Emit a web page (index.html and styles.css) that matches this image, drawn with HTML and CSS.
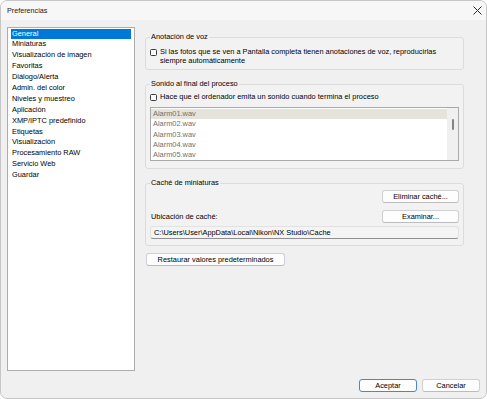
FILE: index.html
```html
<!DOCTYPE html>
<html lang="es">
<head>
    <meta charset="UTF-8">
    <meta name="viewport" content="width=device-width, initial-scale=1.0">
    <title>Preferencias</title>
    <link rel="stylesheet" href="styles.css">
</head>
<body>
    <div class="window">
        <div class="titlebar">
            <span class="title">Preferencias</span>
            <svg class="close-icon" width="9" height="9" viewBox="0 0 9 9">
                <path d="M0.5 0.5 L8.5 8.5 M8.5 0.5 L0.5 8.5" stroke="#2b2b2b" stroke-width="1" fill="none"/>
            </svg>
        </div>

        <div class="content">
            <ul class="nav-list">
                <li class="nav-item selected">General</li>
                <li class="nav-item">Miniaturas</li>
                <li class="nav-item">Visualización de imagen</li>
                <li class="nav-item">Favoritas</li>
                <li class="nav-item">Diálogo/Alerta</li>
                <li class="nav-item">Admin. del color</li>
                <li class="nav-item">Niveles y muestreo</li>
                <li class="nav-item">Aplicación</li>
                <li class="nav-item">XMP/IPTC predefinido</li>
                <li class="nav-item">Etiquetas</li>
                <li class="nav-item">Visualización</li>
                <li class="nav-item">Procesamiento RAW</li>
                <li class="nav-item">Servicio Web</li>
                <li class="nav-item">Guardar</li>
            </ul>

            <div class="panel">
                <fieldset class="group group-voice">
                    <legend>Anotación de voz</legend>
                    <label class="check">
                        <span class="check-box"></span>
                        <span class="check-text">Si las fotos que se ven a Pantalla completa tienen anotaciones de voz, reproducirlas<br>siempre automáticamente</span>
                    </label>
                </fieldset>

                <fieldset class="group group-sound">
                    <legend>Sonido al final del proceso</legend>
                    <label class="check">
                        <span class="check-box"></span>
                        <span class="check-text">Hace que el ordenador emita un sonido cuando termina el proceso</span>
                    </label>
                    <div class="sound-list">
                        <ul class="sound-items">
                            <li class="sound-item active">Alarm01.wav</li>
                            <li class="sound-item">Alarm02.wav</li>
                            <li class="sound-item">Alarm03.wav</li>
                            <li class="sound-item">Alarm04.wav</li>
                            <li class="sound-item">Alarm05.wav</li>
                        </ul>
                        <div class="scrollbar">
                            <div class="scroll-thumb"></div>
                        </div>
                    </div>
                </fieldset>

                <fieldset class="group group-cache">
                    <legend>Caché de miniaturas</legend>
                    <div class="cache-row cache-row-top">
                        <button class="btn btn-cache">Eliminar caché...</button>
                    </div>
                    <div class="cache-row">
                        <span>Ubicación de caché:</span>
                        <button class="btn btn-cache">Examinar...</button>
                    </div>
                    <div class="path-field">C:\Users\User\AppData\Local\Nikon\NX Studio\Cache</div>
                </fieldset>

                <button class="btn btn-restore">Restaurar valores predeterminados</button>
            </div>
        </div>

        <div class="footer">
            <button class="btn btn-dialog btn-default">Aceptar</button>
            <button class="btn btn-dialog">Cancelar</button>
        </div>
    </div>
</body>
</html>
```
FILE: styles.css
```css
:root {
    --window-bg: #f0f0f0;
    --title-bg: #f7f7f7;
    --text-color: #000;
    --accent: #0078d7;
    --group-border: #dcdcdc;
}

* {
    margin: 0;
    padding: 0;
    box-sizing: border-box;
    font-family: 'Liberation Sans', Arial, sans-serif;
}

body {
    background: #ffffff;
    color: var(--text-color);
    font-size: 7.4px;
}

.window {
    width: 487px;
    height: 399px;
    border: 1px solid #c6c6c6;
    border-radius: 7px;
    overflow: hidden;
    background-color: var(--window-bg);
    display: flex;
    flex-direction: column;
}

.titlebar {
    height: 19px;
    background-color: var(--title-bg);
    display: flex;
    align-items: center;
    justify-content: space-between;
    padding: 0 4px 0 6px;
}

.title {
    font-size: 7.2px;
    color: #1a1a1a;
}

.close-icon {
    display: block;
}

.content {
    flex: 1;
    display: flex;
    padding: 7px 0 0 6px;
}

/* left category list */
.nav-list {
    list-style: none;
    width: 128px;
    height: 344px;
    background: #fff;
    border: 1px solid #adadad;
    padding: 0.5px 3px 0 3px;
}

.nav-item {
    height: 10.9px;
    line-height: 10.9px;
    padding-left: 1px;
    white-space: nowrap;
}

.nav-item.selected {
    background-color: var(--accent);
    color: #fff;
}

.panel {
    width: 319px;
    margin-left: 10px;
}

/* group boxes */
.group {
    border: 1px solid var(--group-border);
    border-radius: 3px;
    background-color: #f2f2f2;
    padding: 0 3px 0 4px;
    margin-top: 8px;
}

.group legend {
    line-height: 10px;
    padding: 0 1px;
    margin-left: 0;
}

.group-voice {
    margin-top: 5px;
    padding-top: 5px;
    padding-bottom: 4px;
}

.group-sound {
    margin-top: 9px;
    padding-top: 3px;
    padding-bottom: 7px;
}

.group-cache {
    margin-top: 9px;
    padding-top: 2px;
    padding-bottom: 6px;
}

.check {
    display: flex;
    align-items: flex-start;
    gap: 3px;
    line-height: 9px;
}

.check-box {
    flex: none;
    width: 7px;
    height: 7px;
    margin-top: 1.5px;
    border: 1px solid #3a3a3a;
    border-radius: 1.5px;
    background: #f8f8f8;
}

/* sound list */
.sound-list {
    display: flex;
    height: 54px;
    margin-top: 6px;
    background: #fff;
    border: 1px solid #a9a9a9;
    margin-right: 1px;
}

.sound-items {
    list-style: none;
    flex: 1;
    padding-top: 1px;
}

.sound-item {
    height: 10.25px;
    line-height: 10.25px;
    padding-left: 2px;
    color: #707070;
}

.sound-item.active {
    background-color: #e4e4da;
}

.scrollbar {
    width: 11px;
    background-color: #f0f0f0;
    padding: 11px 0 0 5px;
}

.scroll-thumb {
    width: 2px;
    height: 11px;
    border-radius: 1px;
    background-color: #858585;
}

/* cache */
.cache-row {
    display: flex;
    align-items: center;
    justify-content: space-between;
    margin-top: 7px;
    padding-left: 1px;
    margin-right: 1px;
}

.cache-row-top {
    justify-content: flex-end;
    margin-top: 0;
}

.path-field {
    margin-top: 3px;
    height: 13px;
    line-height: 12px;
    padding-left: 3px;
    background-color: #f4f4f4;
    border: 1px solid #e2e2e2;
    border-bottom-color: #8f8f8f;
    border-radius: 3px;
    margin-right: 1px;
}

/* buttons */
.btn {
    height: 13px;
    font-size: 7.4px;
    color: #000;
    background-color: #fdfdfd;
    border: 1px solid #d0d0d0;
    border-bottom-color: #bcbcbc;
    border-radius: 3px;
    text-align: center;
    line-height: 11px;
}

.btn-cache {
    width: 77px;
}

.btn-restore {
    width: 139px;
    margin: 7px 0 0 1px;
}

.footer {
    display: flex;
    justify-content: flex-end;
    gap: 5px;
    padding: 0 6px 6px 0;
}

.btn-dialog {
    width: 58px;
}

.btn-default {
    border-color: #4a86c8;
}
```
